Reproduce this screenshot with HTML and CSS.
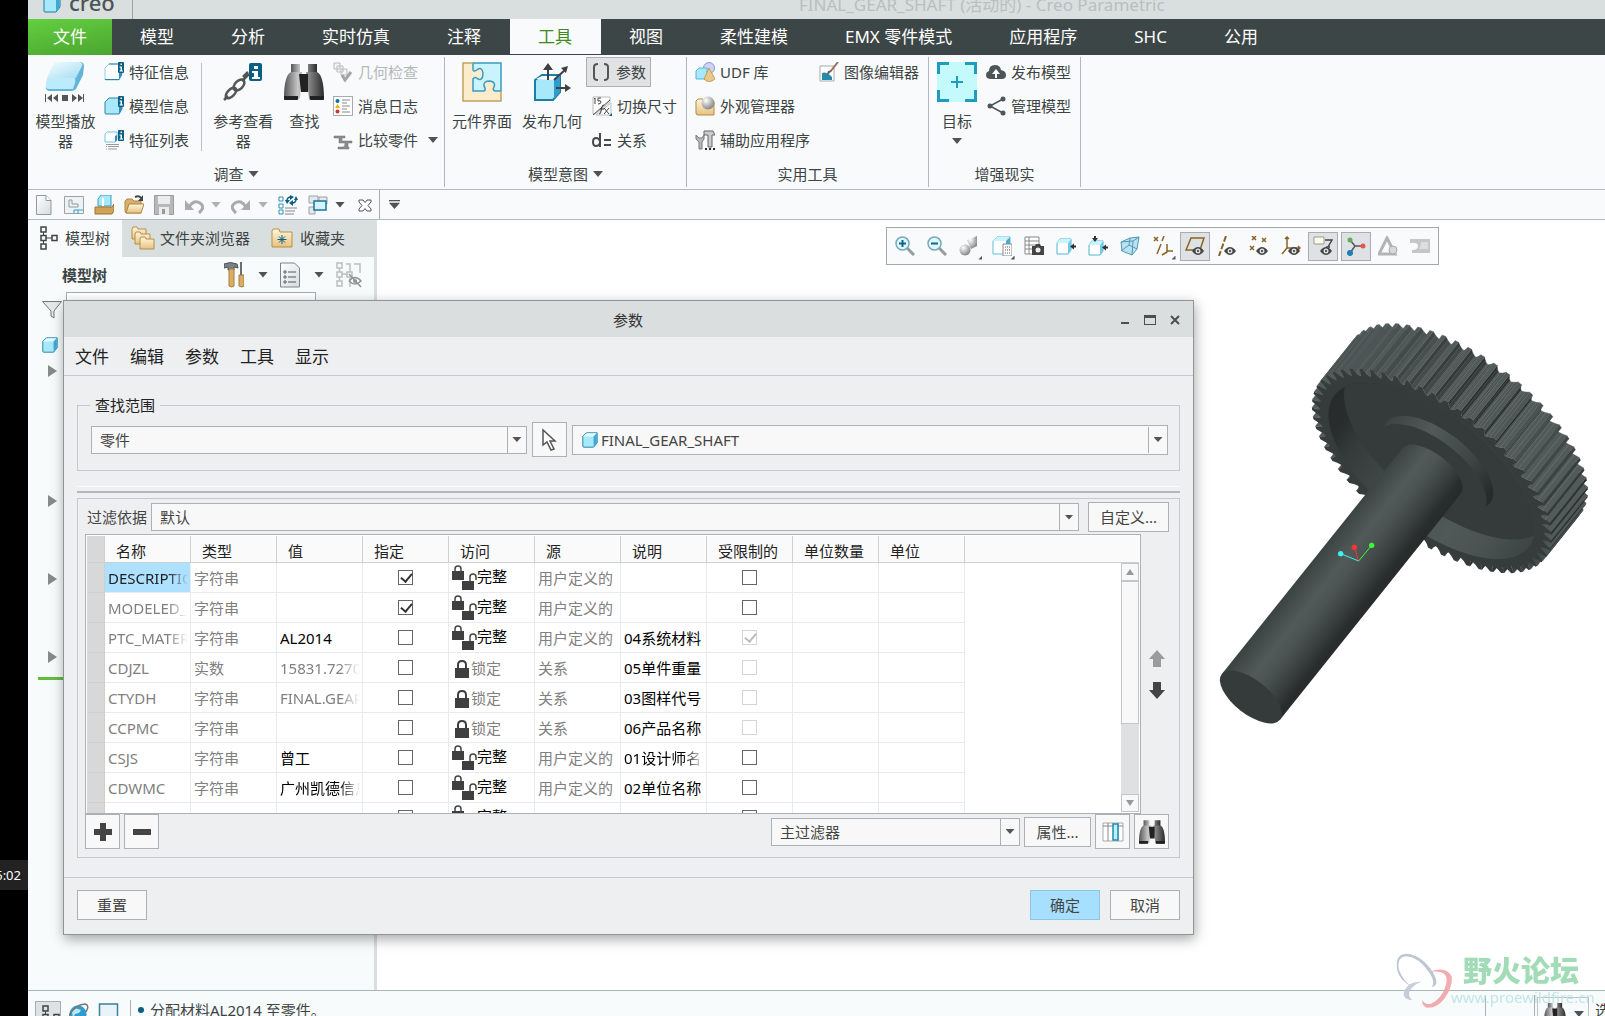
FILE: index.html
```html
<!DOCTYPE html>
<html lang="zh-CN">
<head>
<meta charset="utf-8">
<title>FINAL_GEAR_SHAFT (活动的) - Creo Parametric</title>
<link rel="stylesheet" href="styles.css">
</head>
<body>
<svg class="sprite" aria-hidden="true">
  <defs>
    <linearGradient id="g-ice" x1="0" y1="0" x2="1" y2="1"><stop offset="0" stop-color="#f4fcff"/><stop offset="1" stop-color="#a5ddf2"/></linearGradient>
    <linearGradient id="g-metal" x1="0" x2="1"><stop offset="0" stop-color="#555"/><stop offset=".35" stop-color="#c8c8c8"/><stop offset="1" stop-color="#2b2b2b"/></linearGradient>
    <linearGradient id="g-sand" x1="0" y1="0" x2="0" y2="1"><stop offset="0" stop-color="#fff6df"/><stop offset="1" stop-color="#e7c27f"/></linearGradient>
    <linearGradient id="g-page" x1="0" y1="0" x2="1" y2="1"><stop offset="0" stop-color="#fff"/><stop offset="1" stop-color="#d3dce0"/></linearGradient>
    <radialGradient id="g-ball" cx=".35" cy=".3" r=".8"><stop offset="0" stop-color="#fff"/><stop offset="1" stop-color="#777"/></radialGradient>
  </defs>
  <symbol id="cube" viewBox="0 0 20 20"><path d="M2 6l4-4h12v11l-4 5H3q-1 0-1-1z" fill="#a8e8fb" stroke="#1b7ea3"/><path d="M2.500 6l4-3.500h11L14 6z" fill="#e6faff"/><path d="M14 6l3.500-3.500V13L14 17.500z" fill="#3ba9d6"/></symbol>
  <symbol id="badge" viewBox="0 0 20 20"><rect x="14" width="6" height="11" rx="1" fill="#0b5f80"/><path d="M16.500 1.500h1.500v1.500h-1.500zM15.500 4.500h2.500v4h1v1h-3.500v-1h1v-3h-1z" fill="#fff"/></symbol>
  <symbol id="feat" viewBox="0 0 20 20"><path d="M1 6l4-4h9l4 2v9l-3 5H2q-1 0-1-1z" fill="#fff" stroke="#8fd3ec"/><path d="M15 9v9l3-5V9z" fill="#2e8fc0"/><path d="M5 2h9M1 17.500h14" stroke="#2b83a8"/><use href="#badge"/></symbol>
  <symbol id="modelinfo" viewBox="0 0 20 20"><path d="M1 6l4-4h9l4 2v9l-3 5H2q-1 0-1-1z" fill="#a9e8fb" stroke="#2b83a8"/><path d="M15 9v9l3-5V9z" fill="#2e8fc0"/><use href="#badge"/></symbol>
  <symbol id="featlist" viewBox="0 0 20 20"><path d="M1 4l2-2h10v8l-2 2H1z" fill="#fff" stroke="#72c5e6"/><path d="M11 6v6l2-2V5z" fill="#2e8fc0"/><path d="M2 14.500h13M2 16.500h1M4 16.500h11M2 19h1M4 19h9" stroke="#999"/><use href="#badge"/></symbol>
  <symbol id="player" viewBox="0 0 40 40"><path d="M11 0h25q3 1 3 4l-1 9-7 14q-2 2-5 2H4q-4-1-3-5l2-8z" fill="#62b5d8"/><path d="M11 0h24q3 1 2 4l-6 12H2Q8 1 11 0z" fill="url(#g-ice)"/><path d="M2 16h27q2 0 1 5l-2 6H4q-4 0-3-4z" fill="#bcecfb"/><path d="M0 32h1v8H0zM7 32v8l-5-4zM13 32v8l-5-4zM17 33h6v6h-6zM27 32v8l5-4zM33 32v8l5-4zM38 32h1v8h-1z" fill="#555"/></symbol>
  <symbol id="chain" viewBox="0 0 40 40"><g fill="none" stroke="#555" stroke-width="2.500"><ellipse cx="8" cy="31" rx="6.500" ry="3.500" transform="rotate(-45 8 31)"/><ellipse cx="16" cy="23" rx="6.500" ry="4" transform="rotate(-45 16 23)"/><path d="M12 27l-1 1M20 15l5-5M19 19l7-7M1 38l4-4"/></g><rect x="26" y="1" width="13" height="18" rx="2" fill="#0b5f80"/><path d="M31 4h4v3h-4zM29 9h6v6h2v2h-8v-2h2v-4h-2z" fill="#fff"/></symbol>
  <symbol id="binoc" viewBox="0 0 40 40"><path d="M7 2h9v9H7zM24 2h9v9h-9z" fill="url(#g-metal)"/><path d="M7 10h11l-2 26q-1 2-3 2H2q-2 0-2-2c0-13 2-24 7-26zM33 10H22l3 26q0 2 2 2h11q2 0 2-2c0-13-2-24-7-26z" fill="url(#g-metal)"/><path d="M0 34h14v3q0 1-1 1H1q-1 0-1-1zM26 34h14v3q0 1-1 1H27q-1 0-1-1z" fill="#222"/><path d="M15 12h9v18h-7z" fill="#222"/></symbol>
  <symbol id="geocheck" viewBox="0 0 20 20"><g fill="#f4f4f4" stroke="#bbb"><path d="M1 1h6v6H1zM4 4h6v6H4zM8 7h6v6H8z"/></g><path d="M9 13l3 5 6-8" fill="none" stroke="#a5a5a5" stroke-width="3"/></symbol>
  <symbol id="log" viewBox="0 0 20 20"><rect x=".5" y=".5" width="19" height="19" fill="#fff" stroke="#aaa"/><circle cx="4.500" cy="5" r="2" fill="#0b6f96"/><path d="M4.500 8l2.500 4H2z" fill="#f0b000"/><circle cx="4.500" cy="15.500" r="2" fill="#c8372b"/><path d="M9 4h8M9 7h5M9 10h8M9 13h5M9 16h8" stroke="#888"/></symbol>
  <symbol id="compare" viewBox="0 0 20 20"><path d="M1 6h11v2H9v3h10v2h-4v4h1v2H5v-2h5q2 0 2-4H6V8H1z" fill="#8b8b8b" stroke="#777" stroke-width=".5"/></symbol>
  <symbol id="puzzle" viewBox="0 0 40 40"><path d="M1 1h38v38H1z" fill="#fdeccb"/><path d="M11 1h28v28h-6q-3-1-1-4 2-5-4-6-7 0-6 5 3 5-1 5H11V17q2-3 5 0 5 2 5-6-1-6-5-4-5 4-5 0z" fill="#c9f3fd" stroke="#3a9bc1" stroke-width="1.500"/><path d="M11 1H1v38h38V29" fill="none" stroke="#c4a160" stroke-width="1.500"/></symbol>
  <symbol id="publish" viewBox="0 0 40 40"><path d="M3 18l7-5h18v17l-7 8H3z" fill="#a8e8fb" stroke="#1b7ea3" stroke-width="2"/><path d="M22 18l6-5v17l-6 7z" fill="#2f9ccb"/><path d="M4 17l6-3h18l-6 4z" fill="#f1fcff"/><path d="M16 18V4M22 18L34 7M24 26h12" stroke="#404040" stroke-width="2"/><path d="M16 1l5 7H11zM36 4l-2 7-5-5zM39 26l-6 4v-8z" fill="#404040"/></symbol>
  <symbol id="brackets" viewBox="0 0 20 20"><path d="M7 2Q3 2 3 5v10q0 3 4 3M13 2q4 0 4 3v10q0 3-4 3" fill="none" stroke="#555" stroke-width="2"/></symbol>
  <symbol id="dims" viewBox="0 0 20 20"><path d="M1 1h17v5L3 18H1zM4 19h15V7z" fill="#fff" stroke="#bbb"/><path d="M2 3l1-1v6M9 2H6v3q3-1 3 1t-3 2M7 18q2 0 2-3l1-4q0-2 2-2M8 13h4M12 12l5 6M17 12l-5 6M1 19L18 4" fill="none" stroke="#444"/><path d="M17 20l3-3v3z" fill="#0b5f80"/></symbol>
  <symbol id="rel" viewBox="0 0 20 20"><path d="M8 3v14M8 11q-1-3-4-3t-3 4 3 4 4-3" fill="none" stroke="#4a4a4a" stroke-width="2"/><path d="M12 9h7v2h-7zM12 14h7v2h-7z" fill="#4a4a4a"/></symbol>
  <symbol id="udf" viewBox="0 0 20 20"><circle cx="14" cy="6" r="5.500" fill="#cdd5f6" stroke="#8b98d6"/><path d="M1 9l3-3h8v9l-2 2H1z" fill="#a8e8fb" stroke="#58b7d8"/><path d="M14 6l6 11q-6 5-11 0z" fill="#e9c98b" stroke="#c59b4f"/></symbol>
  <symbol id="appearance" viewBox="0 0 20 20"><path d="M1 5l2-2h5l2 3h9v13H3q-2 0-2-2z" fill="url(#g-sand)" stroke="#b48b46"/><circle cx="13" cy="7" r="6.500" fill="url(#g-ball)"/></symbol>
  <symbol id="aux" viewBox="0 0 20 20"><path d="M1 5v4l3 3v7h3v-7l2-3V5L7 8H4z" fill="#bbb" stroke="#777"/><path d="M9 1h9l2 4h-3v12h-4V5H9z" fill="#ccc" stroke="#666"/><path d="M10 18h2v2h-2zM14 18h2v2h-2zM18 18h2v2h-2z" fill="#222"/></symbol>
  <symbol id="imgedit" viewBox="0 0 20 20"><path d="M1 4h14v15H1z" fill="#fff" stroke="#aaa"/><path d="M3 11q4-2 10 4v3H3z" fill="#2689ae"/><path d="M19 0l-8 10" stroke="#a06b5a" stroke-width="2"/><path d="M13 8l-3 4-3 2 2-5z" fill="#666"/></symbol>
  <symbol id="target" viewBox="0 0 40 40"><path d="M0 0h40v40H0z" fill="#c4fafc"/><path d="M1.500 12V1.500H12M28 1.500h10.500V12M38.500 28v10.500H28M12 38.500H1.500V28" fill="none" stroke="#1d9cbd" stroke-width="3"/><path d="M20 14v12M14 20h12" stroke="#1d9cbd" stroke-width="2"/></symbol>
  <symbol id="cloud" viewBox="0 0 20 20"><path d="M5 17q-5 0-5-4 0-3 3-4 0-6 6-6 5 0 6 5 5 1 5 5 0 4-4 4z" fill="#4c5658"/><path d="M10 7l4 5h-3v4H9v-4H6z" fill="#fff"/></symbol>
  <symbol id="share" viewBox="0 0 20 20"><path d="M17 3L4 10l13 7" fill="none" stroke="#4c5658" stroke-width="1.500"/><g fill="#4c5658"><circle cx="17" cy="3" r="2.500"/><circle cx="4" cy="10" r="2.500"/><circle cx="17" cy="17" r="2.500"/></g></symbol>
  <symbol id="page" viewBox="0 0 20 20"><path d="M2.500.5H12l5 5v14H2.500z" fill="url(#g-page)" stroke="#909a9e"/><path d="M12 .5v5h5" fill="#fff" stroke="#909a9e"/></symbol>
  <symbol id="draw" viewBox="0 0 20 20"><path d="M.5 1.500h19v17H.5z" fill="#eef2f3" stroke="#9aa3a6"/><path d="M5 5h3v4h6v3H5z" fill="none" stroke="#8f989b"/><path d="M10 18v-3h9M14 15v4" stroke="#2e9fd0" fill="none"/></symbol>
  <symbol id="box" viewBox="0 0 20 20"><path d="M4 4l3-4h10v11H4z" fill="#a8e8fb" stroke="#3c9fc5"/><path d="M8 3h2v8H8z" fill="#fff"/><path d="M1 12h17l2-3v7l-2 3H1z" fill="#d0a256" stroke="#9b7430"/></symbol>
  <symbol id="folder" viewBox="0 0 20 20"><path d="M1 6l2-2h5l2 2h7v12H3q-2 0-2-2z" fill="#d9b06b" stroke="#b08843"/><path d="M5 9h15l-3 9H2z" fill="url(#g-sand)" stroke="#b08843"/><path d="M11 2q4-2 6 1" stroke="#444" fill="none" stroke-width="2"/><path d="M19 0v6h-5z" fill="#444"/></symbol>
  <symbol id="save" viewBox="0 0 20 20"><path d="M.5.500h19v19H.5z" fill="#b6b8b9" stroke="#9a9c9d"/><path d="M4 1h12v8H4zM5 12h10v8H5z" fill="#ececec"/><path d="M8 14h3v5H8z" fill="#999"/></symbol>
  <symbol id="undo" viewBox="0 0 20 20"><path d="M5 12q5-8 11-4t-1 10" fill="none" stroke="#a9abac" stroke-width="3"/><path d="M1 5v10h9z" fill="#a9abac"/></symbol>
  <symbol id="regen" viewBox="0 0 20 20"><path d="M1 2h4v4H1zM1 9h4v4H1zM1 15h4v4H1z" fill="#fff" stroke="#2e8fb4"/><path d="M9 6q0-4 4-4M18 4q0 4-4 4" fill="none" stroke="#0b5f80" stroke-width="1.500"/><path d="M12 0l4 2-4 3zM15 5v6l-4-3zM7 5h5L9 9zM16 5h4l-2-4z" fill="#0b5f80"/><path d="M7 13h12M7 16h10M7 19h9" stroke="#888"/></symbol>
  <symbol id="wins" viewBox="0 0 20 20"><path d="M1 1h9v7H1zM11 2h8v7h-8zM1 12h6v7H1z" fill="#e5e9eb" stroke="#9aa2a5"/><path d="M6 6h12v9H6z" fill="#d5f3fc" stroke="#17769c" stroke-width="1.500"/></symbol>
  <symbol id="close" viewBox="0 0 20 20"><path d="M4 5h4l2 2.500L12 5h4v2l-3 3.500 3 3.500v2h-4l-2-2.500L8 16H4v-2l3-3.500L4 7z" fill="#fff" stroke="#555"/></symbol>
  <symbol id="tree" viewBox="0 0 20 24"><path d="M2 1h5v5H2zM2 9.500h5v5H2zM2 18h5v5H2zM13 9.500h5v5h-5z" fill="none" stroke="currentColor" stroke-width="1.500"/><path d="M4.500 6v3M4.500 15v3M7 12h6" stroke="currentColor"/></symbol>
  <symbol id="folders" viewBox="0 0 24 24"><g fill="url(#g-sand)" stroke="#b78e4a"><path d="M1 3l1-2h4l1 2h8v10H1z"/><path d="M4 8l1-2h4l1 2h9v10H4z"/><path d="M9 13l1-2h4l1 2h8v10H9z"/></g></symbol>
  <symbol id="fav" viewBox="0 0 22 20"><path d="M1 3l1-2h6l1 3h12v15H1z" fill="url(#g-sand)" stroke="#b78e4a"/><path d="M11 7v9M6.500 11.500h9M8 8.500l6 6M14 8.500l-6 6" stroke="#0b5f80"/></symbol>
  <symbol id="hammer" viewBox="0 0 20 26"><path d="M0 2q6-3 13 0l1 4-4-1v3H4V5L0 6z" fill="#7b7f87" stroke="#4d5057"/><path d="M5 7h5v17q-2 2-5 0zM15 13h5v11q-2 2-5 0z" fill="#d9ad66" stroke="#a67d3a"/><path d="M17 0v13" stroke="#6a6d78" stroke-width="2"/></symbol>
  <symbol id="listpage" viewBox="0 0 20 26"><path d="M.5 1h14l5 5v19H.5z" fill="url(#g-page)" stroke="#7c8589"/><path d="M8 10h8M8 15h8M8 20h8" stroke="#555"/><g fill="none" stroke="#555"><circle cx="5" cy="10" r="1.200"/><circle cx="5" cy="15" r="1.200"/><circle cx="5" cy="20" r="1.200"/></g></symbol>
  <symbol id="treehide" viewBox="0 0 26 26"><g fill="none" stroke="#b9bebf"><path d="M1 1h5v5H1zM1 10h5v5H1zM1 19h5v5H1zM11 10h5v5h-5zM6 12h5M3.500 6v4M3.500 15v4M10 2h4v8M18 2h6v9M14 16v9" stroke-width="1.500"/></g><path d="M13 19q6-7 12 0-6 6-12 0M13 12l12 13" fill="none" stroke="#8f9495" stroke-width="1.500"/><circle cx="19" cy="19" r="2" fill="#8f9495"/></symbol>
  <symbol id="funnel" viewBox="0 0 20 20"><path d="M.5 1.500h19L12 11v7l-3-2v-5z" fill="#e5e7e8" stroke="#777"/></symbol>
  <symbol id="lock" viewBox="0 0 16 18"><path d="M4 9V5q0-4 4-4t4 4v4" fill="none" stroke="#3f3f3f" stroke-width="2"/><path d="M1 8h14v10H1z" fill="#3f3f3f"/></symbol>
  <symbol id="locks" viewBox="0 0 25 26"><path d="M3 7V4q0-3 3-3t3 3v3M18 17v-5q0-3 3-3t3 3v3" fill="none" stroke="#444" stroke-width="1.500"/><path d="M0 6h12v9H0zM10 16h12v9H10z" fill="#3f3f3f"/></symbol>
  <symbol id="pointer" viewBox="0 0 20 24"><path d="M4 2v15l4-3 4 8 3-1-4-8h5z" fill="#fff" stroke="#555" stroke-width="1.500"/></symbol>
  <symbol id="cols" viewBox="0 0 22 20"><path d="M1 1h20v18H1z" fill="#fff" stroke="#aaa"/><path d="M1 4h20M6 1v18M16 1v18" stroke="#888"/><path d="M11 2h5v16h-5z" fill="#bfeefd" stroke="#1b8dbb" stroke-width="1.500"/></symbol>
  <symbol id="zoomglass" viewBox="0 0 20 20"><path d="M12 12l7 7" stroke="#999" stroke-width="3"/><circle cx="7.500" cy="7.500" r="6.500" fill="#e2f6fd" stroke="#75aabd" stroke-width="1.500"/></symbol>
  <symbol id="zin" viewBox="0 0 20 20"><use href="#zoomglass"/><path d="M4 7.500h7M7.500 4v7" stroke="#0b6790" stroke-width="2"/></symbol>
  <symbol id="zout" viewBox="0 0 20 20"><use href="#zoomglass"/><path d="M4 7.500h7" stroke="#0b6790" stroke-width="2"/></symbol>
  <symbol id="shade" viewBox="0 0 20 20"><path d="M8 4q4-1 10-4v10l-6 3z" fill="url(#g-ball)"/><circle cx="6" cy="14" r="5.500" fill="url(#g-ball)"/></symbol>
  <symbol id="cubelist" viewBox="0 0 20 20"><path d="M1 5l4-4h13v12l-4 5H1z" fill="#fff" stroke="#62bddd"/><path d="M1 5l4-4h13l-4 4z" fill="#c9f3fd"/><path d="M14 5l4-4v12l-4 4z" fill="#47acd5"/><path d="M11 8h9v12h-9z" fill="#fff" stroke="#888"/><path d="M13 11h5M13 14h5M13 17h5" stroke="#555" stroke-dasharray="1 1"/></symbol>
  <symbol id="camera" viewBox="0 0 20 20"><path d="M1 1h14v17H1zM1 5h14M1 9h14M1 13h14M5 1v17" fill="#fff" stroke="#888"/><path d="M8 10h3l1-2h4l1 2h3v9H8z" fill="#444"/><circle cx="14" cy="14" r="2.500" fill="#eee"/></symbol>
  <symbol id="cubein" viewBox="0 0 20 20"><path d="M1 7l3-4h11v11l-3 4H1z" fill="#fff" stroke="#54b4d6"/><path d="M12 7l3-4v11l-3 4z" fill="#73c9e6"/><path d="M1 7l3-4h11l-3 4z" fill="#c9f3fd"/><path d="M14 10.500l4-3v2h2v2h-2v2z" fill="#333"/></symbol>
  <symbol id="cubetop" viewBox="0 0 20 20"><path d="M1 9l3-4h11v10l-3 4H1z" fill="#fff" stroke="#54b4d6"/><path d="M12 9l3-4v10l-3 4z" fill="#73c9e6"/><path d="M1 9l3-4h11l-3 4z" fill="#c9f3fd"/><path d="M14 11.500l4-3v2h2v2h-2v2zM6 0h2v2h2L7 6 4 2h2z" fill="#333"/></symbol>
  <symbol id="persp" viewBox="0 0 20 20"><path d="M1 6l9-4 9-1-2 12-5 6-10-4z" fill="#b8e1f1" stroke="#5699b5"/><path d="M1 6l12-1 6-4M13 5l-1 14M1 15l8-6 8 4M9 9L10 2" fill="none" stroke="#5699b5"/></symbol>
  <symbol id="datum" viewBox="0 0 20 20"><path d="M1 1l4 4M5 1L1 5M11 0L9 5M8 8l-4 10M14 8v8l-5 3M14 15h6" fill="none" stroke="#8a6425" stroke-width="1.500"/></symbol>
  <symbol id="eye" viewBox="0 0 20 20"><path d="M7 15q6-8 12 0-6 8-12 0z" fill="#444"/><circle cx="13" cy="15" r="2.500" fill="#ddd"/><circle cx="13" cy="15" r="1" fill="#333"/></symbol>
  <symbol id="plane" viewBox="0 0 20 20"><path d="M6 2h13l-4 12H1z" fill="none" stroke="#8a6425" stroke-width="1.500"/><use href="#eye"/></symbol>
  <symbol id="axis" viewBox="0 0 20 20"><path d="M9 0L2 20" stroke="#8a6425" stroke-width="2" stroke-dasharray="6 2"/><use href="#eye"/></symbol>
  <symbol id="pts" viewBox="0 0 20 20"><path d="M3 0l4 4M7 0L3 4M13 2l4 4M17 2l-4 4M1 10l4 4M5 10l-4 4" stroke="#8a6425" stroke-width="1.500"/><use href="#eye"/></symbol>
  <symbol id="csys" viewBox="0 0 20 20"><path d="M6 1v11l-5 6M6 12h13M4 3l2-2 2 2M17 10l2 2-2 2" fill="none" stroke="#8a6425" stroke-width="1.500"/><use href="#eye"/></symbol>
  <symbol id="anno" viewBox="0 0 20 20"><path d="M1 1h10v7H1z" fill="#fffbe6" stroke="#999"/><path d="M12 4h7l-4 7M13 11h4" fill="none" stroke="#444" stroke-width="1.500"/><use href="#eye"/></symbol>
  <symbol id="spin" viewBox="0 0 20 20"><path d="M4 4l5 6h8M9 10l-5 7" fill="none" stroke="#555" stroke-width="1.500"/><circle cx="4" cy="4" r="2.500" fill="#5fae52"/><circle cx="17" cy="10" r="2.500" fill="#e05a50"/><circle cx="4" cy="17" r="3" fill="#1d7fb5"/></symbol>
  <symbol id="sim" viewBox="0 0 20 20"><path d="M9 2l8 16H1z" fill="none" stroke="#b1b3b4" stroke-width="3"/><circle cx="15" cy="14" r="4" fill="#d6d8d9" stroke="#aaa"/></symbol>
  <symbol id="flow" viewBox="0 0 20 20"><path d="M0 3h20v14H2v-3q6 0 6-4T0 7z" fill="#c4c6c8"/><path d="M11 6h7v7h-9q2-3 2-7z" fill="#dcdedf"/></symbol>
  <symbol id="globe" viewBox="0 0 20 20"><circle cx="9" cy="11" r="8.500" fill="#2f9bd0"/><path d="M3 9q3-5 6-3l3 1-2 3-4 1-2 4z" fill="#bfe6f5"/><path d="M0 13Q5 2 16 1q5 1 1 8" fill="none" stroke="#777" stroke-width="1.500"/></symbol>
  <symbol id="screen" viewBox="0 0 20 20"><path d="M1 1h18v14H1z" fill="#e9f4f8" stroke="#3e7f9a" stroke-width="1.500"/></symbol>
</svg>

<aside class="desktop"><time class="clock">5:02</time></aside>

<div class="app">
  <header class="titlebar">
    <div class="brand"><svg width="20" height="20"><use href="#cube"/></svg><span class="brand-name">creo<sup>•</sup></span></div>
    <h1 class="doc-title">FINAL_GEAR_SHAFT (活动的) - Creo Parametric</h1>
  </header>

  <nav class="tabs">
    <button class="tab file">文件</button><button class="tab">模型</button><button class="tab">分析</button><button class="tab">实时仿真</button><button class="tab">注释</button><button class="tab active">工具</button><button class="tab">视图</button><button class="tab">柔性建模</button><button class="tab">EMX 零件模式</button><button class="tab">应用程序</button><button class="tab">SHC</button><button class="tab">公用</button>
  </nav>

  <section class="ribbon">
    <div class="group">
      <div class="tools">
        <button class="big"><svg width="40" height="40"><use href="#player"/></svg><span>模型播放器</span></button>
        <div class="stack">
          <button class="small"><svg><use href="#feat"/></svg>特征信息</button>
          <button class="small"><svg><use href="#modelinfo"/></svg>模型信息</button>
          <button class="small"><svg><use href="#featlist"/></svg>特征列表</button>
        </div>
        <i class="rule"></i>
        <button class="big"><svg width="40" height="40"><use href="#chain"/></svg><span>参考查看器</span></button>
        <button class="big narrow"><svg width="40" height="40"><use href="#binoc"/></svg><span>查找</span></button>
        <div class="stack">
          <button class="small" disabled><svg><use href="#geocheck"/></svg>几何检查</button>
          <button class="small"><svg><use href="#log"/></svg>消息日志</button>
          <button class="small"><svg><use href="#compare"/></svg>比较零件<i class="caret"></i></button>
        </div>
      </div>
      <button class="group-name">调查<i class="caret"></i></button>
    </div>
    <div class="group intent">
      <div class="tools">
        <button class="big"><svg width="40" height="40"><use href="#puzzle"/></svg><span>元件界面</span></button>
        <button class="big"><svg width="40" height="40"><use href="#publish"/></svg><span>发布几何</span></button>
        <div class="stack">
          <button class="small pressed"><svg><use href="#brackets"/></svg>参数</button>
          <button class="small"><svg><use href="#dims"/></svg>切换尺寸</button>
          <button class="small"><svg><use href="#rel"/></svg>关系</button>
        </div>
      </div>
      <button class="group-name">模型意图<i class="caret"></i></button>
    </div>
    <div class="group utility">
      <div class="tools">
        <div class="stack">
          <button class="small"><svg><use href="#udf"/></svg>UDF 库</button>
          <button class="small"><svg><use href="#appearance"/></svg>外观管理器</button>
          <button class="small"><svg><use href="#aux"/></svg>辅助应用程序</button>
        </div>
        <div class="stack"><button class="small"><svg><use href="#imgedit"/></svg>图像编辑器</button></div>
      </div>
      <div class="group-name">实用工具</div>
    </div>
    <div class="group ar">
      <div class="tools">
        <button class="big narrow"><svg width="40" height="40"><use href="#target"/></svg><span>目标</span><i class="caret"></i></button>
        <div class="stack">
          <button class="small"><svg><use href="#cloud"/></svg>发布模型</button>
          <button class="small"><svg><use href="#share"/></svg>管理模型</button>
        </div>
      </div>
      <div class="group-name">增强现实</div>
    </div>
  </section>

  <div class="quick">
    <div class="quick-tools">
      <button aria-label="新建"><svg><use href="#page"/></svg></button>
      <button aria-label="绘图"><svg><use href="#draw"/></svg></button>
      <button aria-label="打开模型"><svg><use href="#box"/></svg></button>
      <button aria-label="打开"><svg><use href="#folder"/></svg></button>
      <button aria-label="保存"><svg><use href="#save"/></svg></button>
      <button aria-label="撤消" class="muted"><svg><use href="#undo"/></svg><i class="caret"></i></button>
      <button aria-label="重做" class="muted"><svg class="flip"><use href="#undo"/></svg><i class="caret"></i></button>
      <button aria-label="重新生成"><svg><use href="#regen"/></svg></button>
      <button aria-label="窗口"><svg><use href="#wins"/></svg><i class="caret"></i></button>
      <button aria-label="关闭"><svg><use href="#close"/></svg></button>
    </div>
    <button class="customize" aria-label="自定义工具栏"><i class="caret"></i></button>
  </div>

  <main class="work">
    <aside class="navigator">
      <div class="nav-tabs">
        <button class="nav-tab current"><svg width="20" height="24"><use href="#tree"/></svg>模型树</button>
        <button class="nav-tab"><svg width="24" height="24"><use href="#folders"/></svg>文件夹浏览器</button>
        <button class="nav-tab"><svg width="22" height="20"><use href="#fav"/></svg>收藏夹</button>
      </div>
      <div class="nav-head">
        <h2>模型树</h2>
        <button aria-label="设置"><svg width="20" height="26"><use href="#hammer"/></svg><i class="caret"></i></button>
        <button aria-label="显示"><svg width="20" height="26"><use href="#listpage"/></svg><i class="caret"></i></button>
        <button aria-label="隐藏"><svg width="26" height="26"><use href="#treehide"/></svg></button>
      </div>
      <div class="nav-search"><svg width="20" height="20"><use href="#funnel"/></svg><input type="text" aria-label="搜索模型树"></div>
      <ul class="model-tree">
        <li class="root"><svg width="18" height="18"><use href="#cube"/></svg></li>
        <li class="node r2"></li><li class="node r7"></li><li class="node r10"></li><li class="node r13"></li>
        <li class="insert-here"></li>
      </ul>
    </aside>
    <section class="canvas">
      <svg class="model" id="model" viewBox="0 0 1215 1320" role="img" aria-label="齿轮轴模型"></svg>
      <div class="view-bar">
        <button aria-label="放大"><svg><use href="#zin"/></svg></button>
        <button aria-label="缩小"><svg><use href="#zout"/></svg></button>
        <button aria-label="着色" class="more"><svg><use href="#shade"/></svg></button>
        <button aria-label="已保存方向" class="more"><svg><use href="#cubelist"/></svg></button>
        <button aria-label="视图管理器"><svg><use href="#camera"/></svg></button>
        <button aria-label="截面"><svg><use href="#cubein"/></svg></button>
        <button aria-label="全部截面"><svg><use href="#cubetop"/></svg></button>
        <button aria-label="透视图"><svg><use href="#persp"/></svg></button>
        <button aria-label="基准" class="more"><svg><use href="#datum"/></svg></button>
        <button aria-label="平面显示" class="on"><svg><use href="#plane"/></svg></button>
        <button aria-label="轴显示"><svg><use href="#axis"/></svg></button>
        <button aria-label="点显示"><svg><use href="#pts"/></svg></button>
        <button aria-label="坐标系显示"><svg><use href="#csys"/></svg></button>
        <button aria-label="注释显示" class="on"><svg><use href="#anno"/></svg></button>
        <button aria-label="旋转中心" class="on"><svg><use href="#spin"/></svg></button>
        <button aria-label="仿真"><svg><use href="#sim"/></svg></button>
        <button aria-label="流动"><svg><use href="#flow"/></svg></button>
      </div>
    </section>
  </main>

  <footer class="status">
    <button class="status-tree" aria-label="导航器"><svg width="20" height="24"><use href="#tree"/></svg></button>
    <button aria-label="浏览器"><svg width="20" height="20"><use href="#globe"/></svg></button>
    <button aria-label="全屏"><svg width="21" height="20"><use href="#screen"/></svg></button>
    <p class="message">分配材料AL2014 至零件。</p>
    <i class="status-gap"></i>
    <button class="status-find" aria-label="查找"><svg width="22" height="22"><use href="#binoc"/></svg><i class="caret"></i></button>
    <span class="status-end">选</span>
  </footer>

  <div class="watermark">
    <svg width="60" height="58" viewBox="0 0 180 174" fill="none"><path d="M8 62Q-4 8 36 8q44 4 78 56 22 40-4 44 12-16-8-44Q70 18 34 16 4 18 12 56q12 34 38 50Q18 92 8 62z" fill="#b5c1cf"/><path d="M104 62q50-18 66 14 4 30-20 64-22 32-54 30-16-6-14-22 8 14 26 10 30-14 42-48 14-38-12-46-14-4-34-2z" fill="#f0a5aa"/><path d="M82 92q-46-2-56 34-2 20 26 22-14-12-8-28 10-20 38-28z" fill="#c2c9d4"/></svg>
    <div class="wm-text"><strong>野火论坛</strong><span>www.proewildfire.cn</span></div>
  </div>

  <section class="dialog" role="dialog" aria-labelledby="dlg-title">
    <header class="dlg-title">
      <h2 id="dlg-title">参数</h2>
      <div class="win-buttons">
        <button aria-label="最小化"><svg width="12" height="12"><path d="M2 8h8v2H2z" fill="#4b4f50"/></svg></button>
        <button aria-label="最大化"><svg width="12" height="12"><path d="M0 1h12v10H0zM1 4v6h10V4z" fill="#4b4f50" fill-rule="evenodd"/></svg></button>
        <button aria-label="关闭"><svg width="12" height="12"><path d="M2 2l8 8M10 2l-8 8" stroke="#4b4f50" stroke-width="2"/></svg></button>
      </div>
    </header>
    <nav class="dlg-menu"><button>文件</button><button>编辑</button><button>参数</button><button>工具</button><button>显示</button></nav>
    <div class="dlg-body">
      <fieldset class="lookin">
        <legend>查找范围</legend>
        <div class="lookin-row">
          <label class="combo kind"><select aria-label="对象类型"><option>零件</option></select><i class="drop"></i></label>
          <button class="square" aria-label="选择"><svg width="20" height="24"><use href="#pointer"/></svg></button>
          <label class="combo object"><svg width="18" height="18"><use href="#cube"/></svg><select aria-label="对象"><option>FINAL_GEAR_SHAFT</option></select><i class="drop"></i></label>
        </div>
      </fieldset>
      <i class="splitter"></i>
      <div class="panel">
        <div class="filter-row">
          <label for="filter">过滤依据</label>
          <div class="combo filter"><select id="filter"><option>默认</option></select><i class="drop"></i></div>
          <button class="btn custom">自定义...</button>
        </div>
        <div class="grid-row">
          <div class="grid">
            <table>
              <colgroup><col class="c-head"><col span="10" class="c"><col></colgroup>
              <thead><tr><th class="rh"></th><th>名称</th><th>类型</th><th>值</th><th>指定</th><th>访问</th><th>源</th><th>说明</th><th>受限制的</th><th>单位数量</th><th>单位</th><th class="fill"></th></tr></thead>
              <tbody>
                <tr><td class="rh"></td><td class="sel"><span class="fade">DESCRIPTION</span></td><td>字符串</td><td></td><td class="chk"><input type="checkbox" aria-label="指定" checked></td><td class="acc"><svg width="25" height="26"><use href="#locks"/></svg>完整</td><td>用户定义的</td><td></td><td class="chk"><input type="checkbox" aria-label="受限制的"></td><td></td><td></td></tr>
                <tr><td class="rh"></td><td><span class="fade">MODELED_BY</span></td><td>字符串</td><td></td><td class="chk"><input type="checkbox" aria-label="指定" checked></td><td class="acc"><svg width="25" height="26"><use href="#locks"/></svg>完整</td><td>用户定义的</td><td></td><td class="chk"><input type="checkbox" aria-label="受限制的"></td><td></td><td></td></tr>
                <tr><td class="rh"></td><td><span class="fade">PTC_MATERIAL</span></td><td>字符串</td><td class="ink">AL2014</td><td class="chk"><input type="checkbox" aria-label="指定"></td><td class="acc"><svg width="25" height="26"><use href="#locks"/></svg>完整</td><td>用户定义的</td><td class="ink">04系统材料</td><td class="chk"><input type="checkbox" aria-label="受限制的" checked disabled></td><td></td><td></td></tr>
                <tr><td class="rh"></td><td>CDJZL</td><td>实数</td><td><span class="fade">15831.7270</span></td><td class="chk"><input type="checkbox" aria-label="指定"></td><td class="acc locked"><svg width="16" height="18"><use href="#lock"/></svg>锁定</td><td>关系</td><td class="ink">05单件重量</td><td class="chk"><input type="checkbox" aria-label="受限制的" disabled></td><td></td><td></td></tr>
                <tr><td class="rh"></td><td>CTYDH</td><td>字符串</td><td><span class="fade">FINAL.GEAR</span></td><td class="chk"><input type="checkbox" aria-label="指定"></td><td class="acc locked"><svg width="16" height="18"><use href="#lock"/></svg>锁定</td><td>关系</td><td class="ink">03图样代号</td><td class="chk"><input type="checkbox" aria-label="受限制的" disabled></td><td></td><td></td></tr>
                <tr><td class="rh"></td><td>CCPMC</td><td>字符串</td><td></td><td class="chk"><input type="checkbox" aria-label="指定"></td><td class="acc locked"><svg width="16" height="18"><use href="#lock"/></svg>锁定</td><td>关系</td><td class="ink">06产品名称</td><td class="chk"><input type="checkbox" aria-label="受限制的" disabled></td><td></td><td></td></tr>
                <tr><td class="rh"></td><td>CSJS</td><td>字符串</td><td class="ink">曾工</td><td class="chk"><input type="checkbox" aria-label="指定"></td><td class="acc"><svg width="25" height="26"><use href="#locks"/></svg>完整</td><td>用户定义的</td><td class="ink"><span class="fade">01设计师名称</span></td><td class="chk"><input type="checkbox" aria-label="受限制的"></td><td></td><td></td></tr>
                <tr><td class="rh"></td><td>CDWMC</td><td>字符串</td><td class="ink"><span class="fade">广州凯德信息</span></td><td class="chk"><input type="checkbox" aria-label="指定"></td><td class="acc"><svg width="25" height="26"><use href="#locks"/></svg>完整</td><td>用户定义的</td><td class="ink">02单位名称</td><td class="chk"><input type="checkbox" aria-label="受限制的"></td><td></td><td></td></tr>
                <tr><td class="rh"></td><td></td><td></td><td></td><td class="chk"><input type="checkbox" aria-label="指定"></td><td class="acc"><svg width="25" height="26"><use href="#locks"/></svg>完整</td><td></td><td></td><td class="chk"><input type="checkbox" aria-label="受限制的"></td><td></td><td></td></tr>
              </tbody>
            </table>
            <div class="scroll"><i class="scroll-head"></i><button class="up" aria-label="向上滚动"></button><i class="thumb"></i><i class="track"></i><button class="down" aria-label="向下滚动"></button></div>
          </div>
          <div class="movers">
            <button aria-label="上移"><svg width="16" height="17"><path d="M8 0l8 9h-4v8H4V9H0z" fill="#9b9b9b"/></svg></button>
            <button aria-label="下移"><svg width="16" height="17"><path d="M8 17l8-9h-4V0H4v8H0z" fill="#444"/></svg></button>
          </div>
        </div>
        <div class="grid-actions">
          <button class="square" aria-label="添加"><svg width="18" height="18"><path d="M6 0h6v6h6v6h-6v6H6v-6H0V6h6z" fill="#444"/></svg></button>
          <button class="square" aria-label="删除"><svg width="18" height="18"><path d="M0 6h18v6H0z" fill="#444"/></svg></button>
          <div class="combo main-filter"><select aria-label="过滤器"><option>主过滤器</option></select><i class="drop"></i></div>
          <button class="btn props">属性...</button>
          <button class="square" aria-label="列"><svg width="22" height="20"><use href="#cols"/></svg></button>
          <button class="square" aria-label="查找"><svg width="26" height="26"><use href="#binoc"/></svg></button>
        </div>
      </div>
    </div>
    <footer class="dlg-foot"><button class="btn">重置</button><button class="btn primary">确定</button><button class="btn">取消</button></footer>
  </section>
</div>
<script src="model.js"></script>
</body>
</html>
```

FILE: styles.css
```css
* { box-sizing: border-box; }
body {
  margin: 0;
  display: flex;
  height: 100vh;
  overflow: hidden;
  background: #000;
  color: #3d4444;
  font: 15px/20px "Noto Sans", "Noto Sans CJK SC", sans-serif;
}
button, select, input { font: inherit; color: inherit; margin: 0; }
button { padding: 0; border: 0; background: none; white-space: nowrap; }
h1, h2, p, ul { margin: 0; padding: 0; font: inherit; list-style: none; }
i { display: block; }
svg { display: block; flex: none; }
.sprite { position: absolute; width: 0; height: 0; }
.caret { flex: none; width: 10px; height: 6px; background: #4e5455; clip-path: polygon(0 0, 100% 0, 50% 100%); }

.desktop { flex: none; width: 28px; display: flex; align-items: flex-end; padding-bottom: 126px; }
.clock { flex: 1; min-width: 0; overflow: hidden; display: flex; justify-content: flex-end; padding-right: 7px; background: #222; color: #fff; font-size: 13px; line-height: 30px; }

.app { position: relative; flex: 1; min-width: 0; display: flex; flex-direction: column; background: #f8fafb; }

.titlebar { flex: none; position: relative; display: flex; align-items: flex-end; height: 19px; overflow: hidden; background: #d9dfde; }
.brand { display: flex; align-items: flex-end; gap: 7px; height: 32px; width: 105px; padding: 0 0 5px 14px; border-right: 1px solid #9da4a4; }
.brand-name { color: #4c5455; font-size: 22px; font-weight: 500; line-height: 24px; }
.brand-name sup { font-size: 10px; }
.doc-title { flex: 1; padding-left: 666px; line-height: 28px; font-size: 17px; color: #b9bebe; white-space: nowrap; }

.tabs { flex: none; display: flex; height: 36px; background: #3d4646; }
.tab { padding: 0 29px 0 28px; color: #fff; font-size: 17px; }
.tab.file { padding: 0 25px; background: linear-gradient(170deg, #63cf3f, #4ba530); }
.tab.active { background: #f8fafb; color: #3c8a1d; margin-bottom: 1px; }

.ribbon { flex: none; display: flex; height: 135px; padding: 2px 0; border-bottom: 1px solid #b2bbbb; }
.group { display: flex; flex-direction: column; width: 417px; border-right: 1px solid #b2b8b9; }
.group.intent { width: 242px; }
.group.utility { width: 242px; }
.group.ar { width: 152px; }
.tools { flex: 1; display: flex; padding-left: 6px; }
.big { width: 64px; margin-right: 6px; padding-top: 5px; display: flex; flex-direction: column; align-items: center; gap: 9px; }
.big span { width: 60px; white-space: normal; word-break: break-all; }
.big.narrow { width: 48px; margin-right: 4px; }
.big.narrow span { width: auto; }
.big .caret { margin-top: -2px; }
.stack { display: flex; flex-direction: column; gap: 4px; align-items: flex-start; }
.small { display: flex; align-items: center; gap: 5px; height: 30px; padding-right: 5px; border: 1px solid transparent; }
.small svg { width: 20px; height: 20px; }
.small .caret { margin-left: 5px; }
.small:disabled { color: #b4b8b9; }
.small.pressed { width: 65px; margin-left: -5px; padding-left: 4px; border-color: #aeb1b2; background: #e0e2e3; }
.rule { width: 1px; height: 88px; margin: 6px 10px 0 6px; background: #bbc1c2; }
.intent .big { width: 62px; margin-right: 8px; }
.utility .tools { padding-left: 7px; gap: 2px; }
.ar .tools { padding-left: 4px; }
.group-name { display: flex; align-items: center; justify-content: center; gap: 5px; height: 26px; }

.quick { flex: none; display: flex; height: 30px; border-bottom: 1px solid #b2bbbb; }
.quick-tools { display: flex; align-items: center; gap: 10px; padding: 0 4px 0 6px; border-right: 1px solid #a5adad; }
.quick-tools button { display: flex; align-items: center; gap: 7px; }
.quick-tools svg { width: 20px; height: 20px; }
.quick-tools .flip { transform: scaleX(-1); }
.muted .caret { background: #aeb2b3; }
.customize { display: flex; align-items: center; padding-left: 9px; }
.customize .caret { width: 11px; height: 9px; clip-path: polygon(0 0, 100% 0, 100% 15%, 0 15%, 0 30%, 100% 30%, 50% 100%, 0 30%); }

.work { flex: 1; min-height: 0; display: flex; background: #fff; }
.navigator { flex: none; width: 349px; background: #f7fbfb; border-right: 3px solid #d9dfde; }
.nav-tabs { display: flex; height: 37px; margin-right: -3px; background: #d9dfde; }
.nav-tab { display: flex; align-items: center; gap: 5px; padding: 0 11px 2px 9px; }
.nav-tab.current { width: 94px; gap: 6px; padding: 0 0 2px 11px; background: #f8fafb; }
.nav-tab:last-child { gap: 7px; padding-left: 10px; }
.nav-head { display: flex; align-items: center; height: 35px; padding-left: 34px; }
.nav-head h2 { width: 168px; font-weight: 600; }
.nav-head button { display: flex; align-items: center; gap: 14px; margin-right: 12px; }
.nav-search { display: flex; align-items: center; gap: 4px; height: 36px; padding-left: 14px; }
.nav-search input { width: 250px; height: 36px; border: 1px solid #9fb0b5; background: #fff; }
.model-tree { display: grid; grid-auto-rows: 26px; padding: 4px 0 0 13px; }
.root { display: flex; align-items: center; }
.node::before { content: ""; display: block; width: 9px; height: 12px; margin: 7px 0 0 7px; background: #868a8b; clip-path: polygon(0 0, 100% 50%, 0 100%); }
.r2 { grid-row: 2; }
.r7 { grid-row: 7; }
.r10 { grid-row: 10; }
.r13 { grid-row: 13; }
.insert-here { grid-row: 14; height: 3px; width: 40px; margin: 7px 0 0 -3px; background: #62bd3c; }

.canvas { flex: 1; position: relative; min-width: 0; }
.model { position: absolute; top: 80px; right: 0; width: 405px; height: 440px; }
.view-bar { display: flex; justify-content: space-between; align-items: center; width: 553px; height: 38px; margin: 7px auto 0 509px; padding: 0 3px; border: 1px solid #a3a8a9; background: #f8fafb; }
.view-bar button { position: relative; display: grid; place-items: center; width: 30px; height: 29px; border: 1px solid transparent; }
.view-bar svg { width: 20px; height: 20px; }
.view-bar .on { border-color: #a9adae; background: #dfe2e4; }
.more::after { content: ""; position: absolute; right: 1px; bottom: 0; width: 4px; height: 4px; background: #555; clip-path: polygon(100% 0, 100% 100%, 0 100%); }

.status { flex: none; display: flex; align-items: flex-start; height: 26px; padding: 9px 0 0 7px; overflow: hidden; border-top: 1px solid #a8b6b6; background: #f7fbfb; }
.status button { margin-right: 9px; padding-top: 3px; }
.status .status-tree { width: 26px; height: 30px; margin: 1px 8px 0 0; padding: 2px 0 0 5px; border: 1px solid #a9adae; background: #dfe2e4; }
.message { flex: 1; display: flex; align-items: center; gap: 6px; margin-left: 2px; padding-left: 7px; border-left: 1px solid #a9adae; }
.message::before { content: ""; width: 6px; height: 6px; border-radius: 50%; background: #0b5f80; }
.status-gap { width: 50px; height: 30px; margin-top: -5px; border: solid #a9b2b2; border-width: 0 1px; }
.status .status-find { display: flex; gap: 8px; width: 52px; height: 30px; margin: -3px 6px 0 2px; padding: 4px 0 0 6px; border: 1px solid #bcc3c3; }
.status-find .caret { margin-top: 9px; }
.status-end { width: 10px; overflow: hidden; }

.watermark { position: absolute; right: 11px; bottom: 7px; display: flex; opacity: .9; }
.wm-text { display: flex; flex-direction: column; width: 143px; margin-left: -4px; white-space: nowrap; }
.wm-text strong { padding-left: 12px; color: #98d9b0; font: 900 29px/36px "Noto Sans CJK SC", sans-serif; }
.wm-text span { color: #bfe3e3; font-size: 15px; line-height: 20px; }

.dialog { position: absolute; left: 35px; top: 300px; width: 1131px; border: 1px solid #8f9495; background: #eeeff1; color: #444; box-shadow: 1px 4px 12px rgba(0, 0, 0, .35); }
.dlg-title { display: flex; align-items: center; height: 36px; padding: 2px 12px 0 0; background: #dadedf; }
.dlg-title h2 { flex: 1; padding-left: 73px; text-align: center; color: #333; }
.win-buttons { display: flex; gap: 13px; }
.dlg-menu { display: flex; gap: 21px; height: 39px; padding: 2px 0 0 11px; border-bottom: 1px solid #c6c9cb; font-size: 17px; color: #222; }
.dlg-body { padding: 19px 13px; }
.lookin { min-width: 0; margin: 0; padding: 7px 11px 13px 13px; border: 1px solid #c6c9cb; }
.lookin legend { margin-left: -1px; padding: 0 5px; line-height: 20px; color: #222; }
.lookin-row { display: flex; align-items: center; gap: 5px; }
.combo { display: flex; align-items: center; height: 28px; border: 1px solid #aeb1b3; background: #f8f8f8; }
.combo svg { margin-left: 8px; }
.combo select { flex: 1; min-width: 0; height: 26px; padding: 0 8px; border: 0; outline: 0; appearance: none; background: none; }
.combo svg + select { padding: 0 2px; }
.drop { display: grid; place-items: center; width: 19px; height: 26px; border-left: 1px solid #aeb1b3; pointer-events: none; }
.drop::before { content: ""; width: 9px; height: 5px; background: #555; clip-path: polygon(0 0, 100% 0, 50% 100%); }
.kind { flex: 436; }
.object { flex: 597; height: 30px; }
.square { display: grid; place-items: center; flex: none; width: 35px; height: 35px; border: 1px solid #aeb1b3; background: #f8f8f8; }
.splitter { height: 7px; margin: 15px 0 5px; border-top: 1px solid #fafafa; border-bottom: 2px solid #b4b7b9; }
.panel { padding: 3px 10px 8px 7px; border: 1px solid #c6c9cb; }
.filter-row { display: flex; align-items: center; gap: 4px; height: 32px; padding: 0 0 2px 2px; }
.filter { flex: 1; margin-right: 5px; }
.btn { height: 30px; width: 70px; border: 1px solid #aeb1b3; background: #f8f8f8; }
.btn.custom { width: 81px; }
.btn.primary { margin-left: auto; border-color: #8fc6e6; background: #a6dfff; }
.grid-row { display: flex; height: 280px; }
.grid { flex: 1; min-width: 0; display: flex; overflow: hidden; padding: 1px; border: 1px solid #aeb1b3; background: #fff; }
table { flex: 1; width: 0; align-self: flex-start; table-layout: fixed; border-collapse: separate; border-spacing: 0; color: #808080; }
.c-head { width: 18px; }
.c { width: 86px; }
th { height: 27px; padding: 3px 0 0 11px; border: solid #ccd0d2; border-width: 0 1px 1px 0; background: #fafafa; color: #222; font-weight: 400; text-align: left; line-height: 20px; white-space: nowrap; }
th.fill { border-right: 0; }
td { height: 30px; padding: 0 0 0 3px; border: solid #e7eaee; border-width: 0 1px 1px 0; line-height: 24px; white-space: nowrap; overflow: hidden; }
.rh { border-color: #cfcfcf; background: #d8d8d8; }
.sel { background: #ade1ff; color: #222; }
.ink { color: #000; }
.fade { display: block; overflow: hidden; margin-right: 2px; mask-image: linear-gradient(to right, #000 calc(100% - 20px), transparent); }
.chk { padding: 0; text-align: center; }
.chk input { position: relative; appearance: none; display: block; width: 15px; height: 15px; margin: 0 auto; border: 1px solid #666; background: #fff; }
.chk input:checked::after { content: ""; position: absolute; left: 4px; top: 0; width: 5px; height: 9px; border: solid #333; border-width: 0 2px 2px 0; transform: rotate(40deg); }
.chk input:disabled { border-color: #d5d5d5; }
.chk input:disabled::after { border-color: #bbb; }
.acc { color: #000; }
.acc svg { display: inline-block; vertical-align: middle; }
.acc.locked { padding-left: 5px; color: #808080; }
.locked svg { margin-right: 1px; }
.scroll { flex: none; width: 18px; display: flex; flex-direction: column; background: #dfe0e2; }
.scroll-head { height: 27px; border-bottom: 1px solid #ccd0d2; background: #fafafa; }
.scroll button, .thumb { border: 1px solid #c3c6c8; background: #f8f8f8; }
.scroll button { display: grid; place-items: center; height: 18px; }
.scroll button::before { content: ""; width: 8px; height: 6px; background: #999; clip-path: polygon(50% 0, 100% 100%, 0 100%); }
.scroll .down::before { clip-path: polygon(0 0, 100% 0, 50% 100%); }
.thumb { flex: 142; }
.track { flex: 71; }
.movers { width: 28px; display: flex; flex-direction: column; align-items: center; justify-content: center; gap: 15px; padding-left: 4px; }
.grid-actions { display: flex; align-items: center; gap: 4px; height: 35px; }
.main-filter { width: 249px; margin-left: auto; }
.props { width: 67px; }
.dlg-foot { display: flex; gap: 10px; padding: 12px 13px 14px; border-top: 1px solid #c6c9cb; }
```

FILE: model.js
```js
// Draws the gear shaft: every point is (radius, angle, depth) projected along the shaft axis.
(function () {
  var svg = document.getElementById('model');
  var NS = 'http://www.w3.org/2000/svg';
  var MX = 0.788, MY = 0.616, AX = 0.625, AY = -0.781, RATIO = 0.46;
  var CX = 695, CY = 513;

  function add(name, attrs, parent) {
    var el = document.createElementNS(NS, name);
    for (var k in attrs) el.setAttribute(k, attrs[k]);
    (parent || svg).appendChild(el);
    return el;
  }
  function project(x, y, d) {
    return [CX + x * MX + y * RATIO * MY + d * AX, CY + x * MY - y * RATIO * MX + d * AY];
  }
  function points(list) {
    return list.map(function (p) { return p[0].toFixed(1) + ',' + p[1].toFixed(1); }).join(' ');
  }
  function shade(angle) {
    var b = Math.min(1, Math.max(0, 0.1 + Math.cos(angle - 2)));
    var c = [39 + b * 43, 43 + b * 48, 43 + b * 47].map(Math.round);
    return 'rgb(' + c + ')';
  }
  function ellipse(r, d, attrs, parent) {
    var c = project(0, 0, d);
    attrs.rx = r; attrs.ry = r * RATIO;
    attrs.transform = 'translate(' + c[0] + ' ' + c[1] + ') rotate(38)';
    return add('ellipse', attrs, parent);
  }

  var TEETH = 58, profile = [];
  for (var i = 0; i < TEETH; i++) {
    var step = Math.PI * 2 / TEETH, a = i * step;
    [[400, 0], [400, .12], [413, .3], [429, .4], [429, .68], [413, .82]].forEach(function (k) {
      var t = a + k[1] * step;
      profile.push([k[0] * Math.cos(t), k[0] * Math.sin(t)]);
    });
  }
  var DEPTH = 174, sides = [];
  profile.forEach(function (p, n) {
    var q = profile[(n + 1) % profile.length];
    var nx = q[1] - p[1], ny = p[0] - q[0];
    if (ny > 0) sides.push({ p: p, q: q, angle: Math.atan2(ny, nx), y: p[1] + q[1] });
  });
  sides.sort(function (m, n) { return m.y - n.y; });
  sides.forEach(function (s) {
    var fill = shade(s.angle);
    add('polygon', {
      points: points([project(s.p[0], s.p[1], 0), project(s.q[0], s.q[1], 0), project(s.q[0], s.q[1], DEPTH), project(s.p[0], s.p[1], DEPTH)]),
      fill: fill, stroke: fill
    });
  });
  add('polygon', { points: points(profile.map(function (p) { return project(p[0], p[1], 0); })), fill: '#363c3c' });

  // Gradients run along the major axis; "span" switches from the shape's own box to the shaft's width.
  var defs = add('defs', {});
  function gradient(id, stops, span) {
    var attrs = { id: id };
    if (span) {
      var p = project(-span, 0, 0), q = project(span, 0, 0);
      attrs = { id: id, gradientUnits: 'userSpaceOnUse', x1: p[0], y1: p[1], x2: q[0], y2: q[1] };
    }
    var g = add('linearGradient', attrs, defs);
    stops.forEach(function (s) { add('stop', { offset: s[0], 'stop-color': s[1] }, g); });
  }
  var r = 111, len = -868;
  var shaft = [[0, '#3d4444'], [.3, '#515a59'], [.45, '#4d5554'], [.7, '#3a4040'], [.88, '#292d2d'], [1, '#272b2b']];
  gradient('rim', [[0, '#272b2b'], [.1, '#292d2d'], [.2, '#363c3c'], [.4, '#424949'], [.7, '#505958'], [.85, '#4b5352'], [1, '#3d4444']]);
  gradient('hub', [[0, '#3c4343'], [.3, '#515a59'], [.7, '#3d4444'], [.95, '#272b2b']]);
  gradient('shaft', shaft, r);
  gradient('shaft-top', shaft);

  var clip = add('clipPath', { id: 'recess' }, defs);
  ellipse(370, 0, {}, clip);
  ellipse(370, 0, { fill: 'url(#rim)' });
  var inner = add('g', { 'clip-path': 'url(#recess)' });
  ellipse(370, 75, { fill: '#353b3b' }, inner);
  ellipse(197, 32, { fill: 'url(#hub)' });
  ellipse(197, 0, { fill: '#353b3b' });

  add('polygon', { points: points([project(-r, 0, 0), project(r, 0, 0), project(r, 0, len), project(-r, 0, len)]), fill: 'url(#shaft)' });
  ellipse(r, 0, { fill: 'url(#shaft-top)' });
  ellipse(r, len, { fill: '#353b3b' });

  [['#3ff0f0', 422, 761], ['#f33', 463, 742], ['#3f3', 515, 736]].forEach(function (m) {
    add('path', { d: 'M476 783L' + m[1] + ' ' + m[2], stroke: m[0], 'stroke-width': 3 });
    add('circle', { cx: m[1], cy: m[2], r: 8, fill: m[0] });
  });
})();
```
